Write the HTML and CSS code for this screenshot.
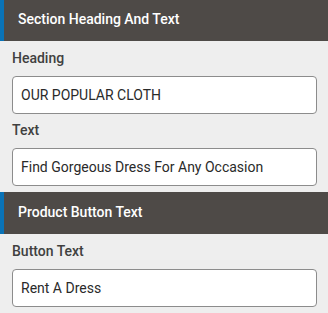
FILE: index.html
```html
<!DOCTYPE html>
<html lang="en">
<head>
    <meta charset="UTF-8">
    <meta name="viewport" content="width=device-width, initial-scale=1.0">
    <title>Section Settings</title>
    <link rel="stylesheet" href="styles.css">
</head>
<body>
    <div class="panel">
        <h3 class="section-title">Section Heading And Text</h3>
        <div class="fields">
            <label for="heading">Heading</label>
            <input type="text" id="heading" value="OUR POPULAR CLOTH">

            <label for="text">Text</label>
            <input type="text" id="text" value="Find Gorgeous Dress For Any Occasion">
        </div>

        <h3 class="section-title">Product Button Text</h3>
        <div class="fields">
            <label for="buttonText">Button Text</label>
            <input type="text" id="buttonText" value="Rent A Dress">
        </div>

        <div class="next-section"></div>
    </div>
</body>
</html>
```

FILE: styles.css
```css
body {
    margin: 0;
    background: #eeeeee;
    font-family: Roboto, "Liberation Sans", Arial, sans-serif;
}

.panel {
    width: 328px;
}

.section-title {
    margin: 0;
    height: 42px;
    box-sizing: border-box;
    padding: 10px 0 0 14px;
    background: #4e4a47;
    border-left: 4px solid #0a73b7;
    color: #fff;
    font-size: 14px;
    font-weight: 500;
    line-height: 20px;
}

.section-title:first-child {
    height: 41px;
    padding-top: 9px;
}

.fields {
    padding: 7px 11px 6px 12px;
}

label {
    display: block;
    color: #404040;
    font-size: 14px;
    font-weight: 500;
    line-height: 20px;
    margin-bottom: 8px;
}

input {
    display: block;
    width: 100%;
    height: 38px;
    box-sizing: border-box;
    margin: 0 0 6px 0;
    padding: 0 8px;
    border: 1px solid #8c8c8c;
    border-radius: 4px;
    background: #fff;
    color: #2a2a2a;
    font-family: inherit;
    font-size: 14px;
}

input:last-child {
    margin-bottom: 0;
}

.next-section {
    height: 4px;
    margin-top: 4px;
    border-left: 4px solid #0a73b7;
}
```
